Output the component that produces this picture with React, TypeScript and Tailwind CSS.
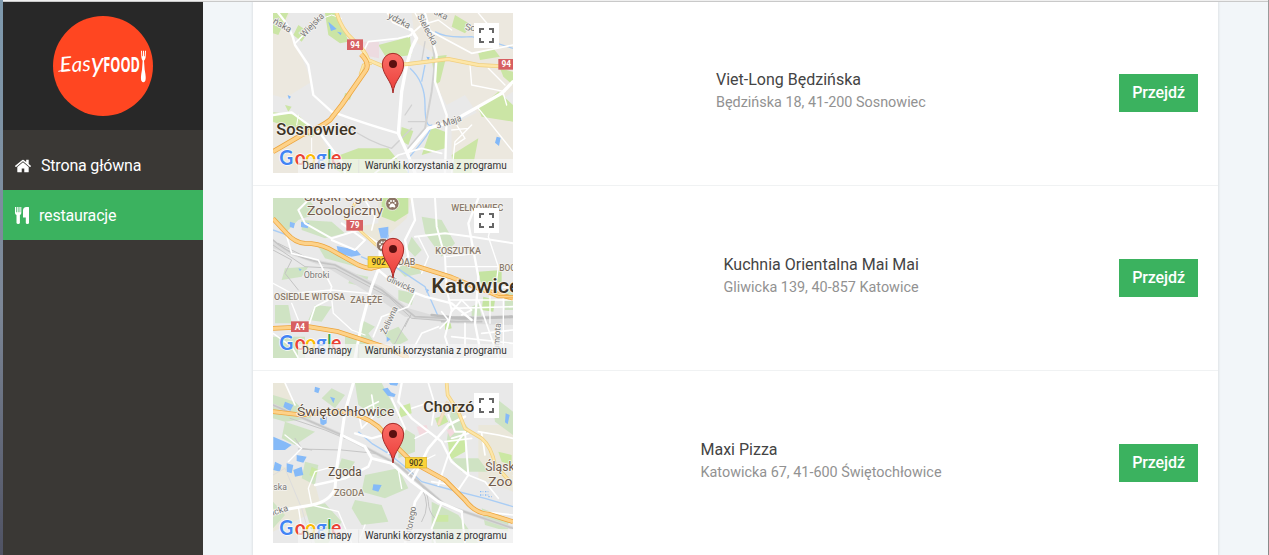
import type { ReactNode } from "react";

const ROAD = "#ffffff";

type Pts = { d: string; w?: number; c?: string };

function Lines({ items, color = ROAD, width = 6 }: { items: Pts[]; color?: string; width?: number }) {
  return (
    <g fill="none" strokeLinejoin="round" strokeLinecap="round">
      {items.map((r, i) => (
        <path key={i} d={r.d} stroke={r.c ?? color} strokeWidth={r.w ?? width} />
      ))}
    </g>
  );
}

function Highway({ d, width = 11, fill = "#fdd28a", edge = "#eda53d" }: { d: string; width?: number; fill?: string; edge?: string }) {
  return (
    <g fill="none" strokeLinejoin="round">
      <path d={d} stroke={edge} strokeWidth={width} />
      <path d={d} stroke={fill} strokeWidth={width - 4.5} />
    </g>
  );
}

function Label({ x, y, size, w, color = "#5f5347", bold = false, rotate = 0, children }: {
  x: number; y: number; size: number; w?: number; color?: string; bold?: boolean; rotate?: number; children: string;
}) {
  return (
    <text
      x={x} y={y} fontSize={size} fill={color} stroke="#f5f3ef" strokeWidth={5} strokeLinejoin="round" paintOrder="stroke"
      fontWeight={bold ? 500 : 400} textLength={w} lengthAdjust="spacingAndGlyphs"
      transform={rotate ? `rotate(${rotate} ${x} ${y})` : undefined}
    >
      {children}
    </text>
  );
}

function Shield({ x, y, w, h = 32, yellow = false, children }: { x: number; y: number; w: number; h?: number; yellow?: boolean; children: string }) {
  return (
    <g>
      <rect x={x} y={y} width={w} height={h} fill={yellow ? "#fbd338" : "#d75f62"} stroke={yellow ? "#dcb52a" : "none"} strokeWidth={2} />
      <text x={x + w / 2} y={y + h / 2 + 9} fontSize={25} fontWeight={yellow ? 500 : 700} textAnchor="middle" fill={yellow ? "#4a4220" : "#ffffff"}>
        {children}
      </text>
    </g>
  );
}

function GoogleMark() {
  const letters: [string, number, string, number][] = [
    ["G", 43, "#4285f4", 42], ["o", 89, "#ea4335", 33], ["o", 121, "#fbbc05", 33], ["g", 153, "#4285f4", 32], ["l", 187, "#34a853", 12], ["e", 198, "#ea4335", 31],
  ];
  return (
    <g className="font-[Lato,sans-serif]" fontSize={60} fontWeight={700} stroke="#ffffff" strokeWidth={4} paintOrder="stroke" strokeLinejoin="round">
      {letters.map(([ch, x, color, w], i) => (
        <text key={i} x={x} y={480} fill={color} textLength={w} lengthAdjust="spacingAndGlyphs">{ch}</text>
      ))}
    </g>
  );
}

function MapView({ id, children }: { id: string; children: ReactNode }) {
  return (
    <svg className="block h-40 w-60 shrink-0 font-[Roboto,sans-serif]" viewBox="24 24 720 480">
      <rect x="24" y="24" width="720" height="480" fill="#e9e9e9" />
      {children}
      <defs>
        <linearGradient id={id} x1="0" y1="0" x2="0" y2="1">
          <stop offset="0" stopColor="#fb6f68" />
          <stop offset="1" stopColor="#ea3c37" />
        </linearGradient>
      </defs>
      <path d="M384 264C381 226 352 211 352 177a32 32 0 0 1 64 0C416 211 387 226 384 264Z" fill={`url(#${id})`} stroke="#a52a27" strokeWidth="3" />
      <circle cx="384" cy="177" r="12" fill="#5c1010" />
      <rect x="627" y="54" width="75" height="75" fill="#ffffff" />
      <path d="M645 84V72h12M672 72h12V84M684 99v12H672M657 111H645V99" fill="none" stroke="#666666" strokeWidth="6" />
      <GoogleMark />
      <rect x="99" y="462" width="645" height="42" fill="#f5f5f5" fillOpacity="0.72" />
      <path d="M281 464V504" stroke="#dddddd" strokeWidth="2" />
      <text x="112" y="492" fontSize="30" fill="#333333" textLength="148" lengthAdjust="spacingAndGlyphs">Dane mapy</text>
      <text x="299" y="492" fontSize="30" fill="#333333" textLength="426" lengthAdjust="spacingAndGlyphs">Warunki korzystania z programu</text>
    </svg>
  );
}

function SosnowiecMap() {
  return (
    <MapView id="pinSosnowiec">
      <path d="M24 24H75L60 60 100 130 140 230 60 280 24 270ZM380 24H744V260L640 330 600 270 545 300 510 235 515 150 450 110 440 24ZM24 325 100 330 165 390 230 504H24ZM560 360 640 320 744 340V504H560Z" fill="#ece8df" />
      <g fill="#cbe5a5">
        <path d="M24 24H70L40 90 24 85ZM180 24H210L240 80 250 110 225 115 190 90ZM100 60 130 80 110 110 85 90ZM25 322 100 330 155 385 140 395 24 350ZM640 310 700 260 744 300V350L650 335ZM500 365 540 380V430L470 450ZM340 120 435 95 440 150 365 160ZM500 155 545 150 525 230 510 240ZM560 450 640 400 620 504H565ZM410 366 445 378 430 420 405 405ZM570 30 620 60 600 85 560 65ZM705 190 744 200V240L715 215ZM170 470 280 430 370 430 430 504H230ZM60 300 80 305 70 320ZM240 264l20 5-5 15-18-4ZM640 145l45-15 20 25-60 10Z" />
      </g>
      <path d="M292 110h50v50l-50-10Z" fill="#eddbe0" />
      <path d="M190 50 215 72 198 78ZM216 80l14 3-3 8ZM695 395l12 3-5 25-12-10ZM68 270l10 5-6 8ZM484 155l10 2-4 10Z" fill="#82b8f8" />
      <g fill="none" stroke="#a9cdf5" strokeWidth="4">
        <path d="M510 80Q540 100 620 95L680 110 744 130M435 190Q480 230 480 300T500 360Q500 380 430 460V504M480 180 470 230" />
      </g>
      <Lines color="#d1d1d1" width={4} items={[
        { d: "M470 24 500 100 510 170 500 260 480 370 430 430", w: 6 }, { d: "M240 360Q310 410 380 430L440 370" }, { d: "M430 350H480M420 330l20-30M480 110 470 170" },
      ]} />
      <Lines items={[
        { d: "M40 24Q80 70 90 120L130 180 145 270 200 320Q310 360 400 385", w: 7 },
        { d: "M90 115 130 75 160 40", w: 5 }, { d: "M370 24 385 50 440 75 455 100 440 130 425 180 410 260 400 385 425 440 450 504", w: 10 },
        { d: "M430 440 490 370 560 350 640 305 710 265 744 230", w: 10 }, { d: "M480 24 500 100 515 150 510 230 545 330 540 504", w: 7 },
        { d: "M430 95 470 60 500 80 620 145 744 120", w: 5 }, { d: "M290 150 310 110 400 100 440 90", w: 5 },
        { d: "M24 330 80 322 165 385 230 470 240 504", w: 7 }, { d: "M615 180 620 240 720 260M670 190 720 240", w: 4 },
        { d: "M330 504 400 450 470 430 530 445", w: 5 }, { d: "M560 504 570 410 620 360M575 360 600 400 570 420M560 375 610 370", w: 4 },
        { d: "M640 310 744 440M450 24 470 60 520 45 560 75M640 24 670 60M715 265 725 300", w: 4 },
        { d: "M145 50 200 30 230 40M100 330 95 360M140 400V440", w: 3 },
      ]} />
      <Highway d="M215 24Q230 75 265 105T310 165L350 182 430 177 550 162 640 180 744 186" width={12} fill="#fde6a8" edge="#f1cf7e" />
      <Highway d="M285 210 295 180 320 175" width={9} fill="#fde6a8" edge="#f1cf7e" />
      <Highway d="M288 148Q315 175 303 195L230 300 195 345Q170 365 110 390L24 440" width={15} />
      <Label x={22} y={54} size={28} rotate={30} color="#777777">ńska</Label>
      <Label x={118} y={98} size={28} w={88} rotate={-46} color="#777777">Wiejska</Label>
      <Label x={367} y={38} size={28} rotate={28} color="#777777">ydzka</Label>
      <Label x={456} y={34} size={27} rotate={62} color="#777777">Sielecka</Label>
      <Label x={505} y={27} size={27} rotate={25} color="#777777">ska</Label>
      <Label x={599} y={74} size={28} rotate={10} color="#777777">So</Label>
      <Label x={517} y={371} size={28} w={78} rotate={-18} color="#777777">3 Maja</Label>
      <Shield x={246} y={103} w={48}>94</Shield>
      <Shield x={700} y={162} w={48}>94</Shield>
      <Label x={34} y={389} size={48} w={240} bold color="#3d3425">Sosnowiec</Label>
    </MapView>
  );
}

function Paw({ x, y }: { x: number; y: number }) {
  return (
    <g transform={`translate(${x} ${y})`}>
      <circle r="20" fill="#8c7465" stroke="#ffffff" strokeWidth="2" />
      <g fill="#ffffff">
        <path d="M0-1C5-1 9 6 9 9S4 12 0 10C-4 12-9 12-9 9S-5-1 0-1Z" />
        <circle cx="-9" cy="-2" r="3" /><circle cx="9" cy="-2" r="3" /><circle cx="-4" cy="-8" r="3" /><circle cx="4" cy="-8" r="3" />
      </g>
    </g>
  );
}

function KatowiceMap() {
  return (
    <MapView id="pinKatowice">
      <path d="M340 24H440L425 85 330 170 270 110 340 100Z" fill="#eae7da" />
      <g fill="#cfe3c3">
        <path d="M24 24H130L160 70 100 90 60 130 24 90ZM110 90 200 95 240 130 180 145 110 120ZM160 170 250 200 290 235 180 205ZM60 235 130 230 110 260 50 270ZM30 345 70 345 80 400 30 400ZM150 345 200 350 170 395 130 390ZM470 80 530 90 570 160 530 200 480 130ZM400 300 450 310 440 345 400 330ZM355 430 400 410 430 450 390 470ZM260 250 310 260 300 290 250 280ZM390 230l60-10 20 30-50 10ZM290 390l40 20-30 30-20-15ZM720 300h24v60h-24ZM440 140l30 40-20 20-25-25Z" />
        <path d="M24 440H120V504H24ZM240 440 310 430 360 504H240ZM620 350l20-10 10 40-30 5Z" />
      </g>
      <path d="M350 24H430V70L390 95 350 80ZM640 245l70-5v35l-60 15ZM540 395l15-5 5 25-20 5ZM655 320l35 10-5 35-35-5Z" fill="#c5e4a2" />
      <path d="M340 115 370 110V140L350 155ZM215 168 275 180 288 195 260 200 220 190ZM75 95l15 5-4 15-12-5ZM108 95l25 5-5 15-20-4ZM365 440l12 8-12 8ZM480 295l12 5-6 10ZM100 235l10 3-5 6Z" fill="#8bbcf9" />
      <path d="M370 135 360 180 390 230 480 290 520 380M24 120 80 140M288 200 360 230" fill="none" stroke="#a9cdf5" strokeWidth="4" />
      <path d="M24 150Q90 200 210 220L350 290 430 355 520 380 744 375V405L560 400 420 380 330 320 190 235 24 175Z" fill="#dcdcdc" />
      <Lines color="#c4c4c4" width={3} items={[
        { d: "M24 150Q90 210 210 225L350 300 450 380 600 388 744 382", w: 5 }, { d: "M24 165 120 230 210 235 370 320 440 385 580 395" },
        { d: "M24 180 80 210 60 250 100 300M40 160 150 215M430 385 390 460 330 504M440 370 420 410" }, { d: "M500 375 560 382 640 384 740 380", w: 8, c: "#bdbdbd" }, { d: "M530 395H650", w: 5 },
      ]} />
      <Lines items={[
        { d: "M345 170V225L320 290 290 400 270 504", w: 9 }, { d: "M440 24 450 90 420 150 430 200 400 230", w: 7 },
        { d: "M340 240 400 290 480 320 560 340 620 390", w: 7 }, { d: "M450 140 540 130 620 140 744 160", w: 6 },
        { d: "M510 24 515 110 540 200 545 300 560 360 540 440 560 504", w: 6 }, { d: "M640 24 610 100 640 260 630 400 650 504", w: 7 },
        { d: "M545 290 620 300 744 290M550 330H744M560 355 744 350M640 330 700 504", w: 5 },
        { d: "M130 30 100 60 120 100 200 145 280 120 340 160M230 100 300 150 270 180 200 150", w: 6 },
        { d: "M24 90 60 120 80 190 160 210 200 290 190 330 150 350 130 410", w: 5 },
        { d: "M24 280 80 310 200 300 310 310M200 325 205 370 260 420 300 435M80 340 100 390", w: 4 },
        { d: "M520 410 470 430 430 504M600 400 600 504M650 430 744 420M560 440 744 460M450 310 430 350 350 380 325 440", w: 5 },
        { d: "M460 140 490 200 470 250M545 200 640 190M545 230 700 230M690 60 670 140 700 230 690 310M675 320V400M715 320V470", w: 4 },
        { d: "M560 365 590 330 620 360 590 375M530 365 550 390 525 415M300 30 330 80 320 120M24 430 80 470 100 504", w: 5 },
      ]} />
      <Highway d="M310 24 270 40 240 90M250 90 350 180" width={9} fill="#fde6a8" edge="#f1cf7e" />
      <Highway d="M24 86 65 130Q90 158 120 160 160 160 190 175L280 225Q305 235 320 235L400 215 460 230 560 262 640 295 744 325" width={14} />
      <Highway d="M24 415 130 410 220 425 370 475 430 504" width={14} />
      <Highway d="M640 295 700 320 744 320" width={10} />
      <Label x={117} y={34} size={37} w={236} color="#715c4d">Śląski Ogród</Label>
      <Label x={126} y={75} size={37} w={228} color="#715c4d">Zoologiczny</Label>
      <Paw x={382} y={41} />
      <Paw x={354} y={165} />
      <Label x={559} y={62} size={25} w={156} bold color="#8a7b6c">WEŁNOWIEC</Label>
      <Label x={511} y={191} size={25} w={137} bold color="#8a7b6c">KOSZUTKA</Label>
      <Label x={703} y={242} size={25} bold color="#8a7b6c">BOG</Label>
      <Label x={400} y={225} size={25} w={51} bold color="#8a7b6c">DĄB</Label>
      <Label x={116} y={265} size={26} w={77} color="#777777">Obroki</Label>
      <Label x={27} y={330} size={25} w={213} bold color="#8a7b6c">OSIEDLE WITOSA</Label>
      <Label x={256} y={338} size={25} w={96} bold color="#8a7b6c">ZAŁĘŻE</Label>
      <Label x={362} y={271} size={26} w={92} rotate={25} color="#777777">Gliwicka</Label>
      <Label x={362} y={434} size={26} w={88} rotate={-65} color="#777777">Żeliwna</Label>
      <Label x={702} y={480} size={26} w={80} rotate={-86} color="#777777">umrota</Label>
      <Label x={499} y={308} size={58} w={268} bold color="#3d3425">Katowice</Label>
      <Shield x={244} y={90} w={50}>79</Shield>
      <Shield x={309} y={200} w={64} yellow>902</Shield>
      <Shield x={78} y={394} w={53}>A4</Shield>
    </MapView>
  );
}

function MaxiMap() {
  return (
    <MapView id="pinMaxi">
      <path d="M24 24H60L80 70 24 110ZM24 270 140 290 170 400 24 470ZM640 150H744V350L640 310Z" fill="#eae7da" />
      <g fill="#cfe3c3">
        <path d="M24 60 90 80 140 130 60 140 24 130ZM60 140 150 170 90 210 50 190ZM200 40 240 60 210 100 170 70ZM270 24H350L390 100 340 130 280 90ZM400 150 450 180 450 230 400 250ZM120 400 180 385 230 440 190 504H150ZM270 375 350 390 370 440 290 450 260 400ZM300 300 400 280 430 340 360 370 290 350ZM120 260 160 270 150 330 110 310ZM560 250 640 250 670 290 590 290ZM500 380 580 420 640 504H500ZM680 60 744 110V180L690 140ZM24 380 60 420 24 460ZM560 90 610 160 580 240 545 200ZM230 250l40 10-20 30-30-10ZM650 400l80 30v40l-70-20Z" />
      </g>
      <path d="M548 195 605 190 600 230 555 255ZM405 95 435 85 440 115 400 130ZM140 275l20 10-12 25-15-10ZM510 130l30-10 10 20-30 15ZM700 230l40 10v30l-30-10ZM510 420h40v20h-40Z" fill="#cbe8a3" />
      <path d="M455 155l30-5 5 20-25 15ZM545 165l15-5 10 12-15 15Z" fill="#f3d9de" />
      <path d="M60 80 85 90 75 110 55 95ZM25 185 60 200 80 210 60 225 25 225ZM65 265 85 270 80 295 65 290ZM85 285 110 275 115 300 90 305ZM95 240l30 5-10 18-20-5ZM30 260l20 10-5 20-20-5ZM150 35l15 5-5 15-12-5ZM325 328 350 330 340 350 322 345ZM352 42 368 38 378 52 392 58 388 66 368 62ZM165 130l20-5v20l-18 10ZM195 65l15 5-5 15ZM722 115l12 5-6 28-8-6ZM372 24H400L396 32 376 30Z" fill="#85baf8" />
      <path d="M645 350h10m5 0h10m-25 10h10m5 0h10M670 365h10" stroke="#85baf8" strokeWidth="4" strokeDasharray="4 4" />
      <path d="M320 205 370 235 420 275 470 320 560 345 660 370 744 395M280 170 320 205" fill="none" stroke="#a9cdf5" strokeWidth="4" />
      <path d="M24 90 230 180 400 270 540 390 744 460" fill="none" stroke="#dadada" strokeWidth="10" />
      <Lines color="#c6c6c6" width={3} items={[
        { d: "M24 90 230 180 400 270 540 390 744 460", w: 5 }, { d: "M100 222 230 225 330 235M90 190 110 220 140 225M75 130 180 165 240 190" },
        { d: "M440 290Q490 350 490 380T510 430M470 340Q500 390 470 440" }, { d: "M24 300 60 280 110 400 140 504", c: "#dddddd" },
      ]} />
      <Lines items={[
        { d: "M265 24 240 110 230 180 215 280 210 340Q195 380 140 390L24 410", w: 9 }, { d: "M230 180 300 215 320 250 380 265 440 320 520 380 590 410", w: 9 },
        { d: "M270 175 320 190 355 180M320 250 310 275 240 310 150 330", w: 7 }, { d: "M410 24 400 80 440 130 530 200 560 260 610 300", w: 7 },
        { d: "M440 320 490 220 550 150 600 125", w: 8 }, { d: "M380 70 420 160 400 210 370 235", w: 6 },
        { d: "M550 120 570 170 600 170 550 240 520 330", w: 6 }, { d: "M610 175 560 190M600 170 610 300 580 345", w: 6 },
        { d: "M470 350 450 380 440 430 420 504", w: 8 }, { d: "M530 385 500 460 510 504M590 410 600 504", w: 6 },
        { d: "M60 180 110 220 70 260M140 390 130 340 150 290 205 275M140 390 220 410 260 504M100 395 110 460 160 490", w: 4 },
        { d: "M320 60 330 120 290 160 280 110 340 80M60 24 90 90M440 100 500 80 540 90M490 24 510 90 500 150", w: 5 },
        { d: "M640 170 700 180 744 190M650 175 660 240M610 300 660 320 700 370M650 410 744 420M540 200 620 190M580 345 560 330 500 320", w: 5 },
        { d: "M450 190 490 170 530 200M400 285 410 340M430 300 470 260 510 240M300 450 280 504", w: 4 },
      ]} />
      <Highway d="M545 24 548 60 580 110 600 160 650 190Q680 215 690 270L744 330" width={11} fill="#fde6a8" edge="#f1cf7e" />
      <Highway d="M520 150 540 100 548 80" width={10} fill="#f3dfc4" edge="#ecd6b5" />
      <Highway d="M24 110 110 120 220 108Q290 115 340 155L400 220 440 260 540 315 600 375Q630 415 670 417L744 440" width={14} />
      <Label x={96} y={124} size={37} w={292} color="#5b4b3c">Świętochłowice</Label>
      <Label x={475} y={112} size={46} w={188} bold color="#3d3425">Chorzów</Label>
      <Label x={190} y={304} size={36} w={100} color="#5b4b3c">Zgoda</Label>
      <Label x={207} y={363} size={26} w={90} bold color="#8a7b6c">ZGODA</Label>
      <Label x={661} y={288} size={40} w={97} color="#715c4d">Śląski</Label>
      <Label x={670} y={332} size={40} w={82} color="#715c4d">Zool</Label>
      <Label x={25} y={346} size={26} color="#777777">ska</Label>
      <Label x={24} y={422} size={27} rotate={-18} color="#777777">icka</Label>
      <Label x={435} y={500} size={27} w={106} rotate={-80} color="#777777">Hutorego</Label>
      <Shield x={421} y={247} w={64} yellow>902</Shield>
    </MapView>
  );
}

function Logo() {
  return (
    <svg className="size-[100px]" viewBox="24 18 300 300" aria-label="EasyFOOD">
      <circle cx="174" cy="168" r="150" fill="#ff4621" />
      <g fill="#ffffff">
        <g className="font-[Lato,sans-serif]" fontStyle="italic">
          <text x="46" y="186" fontSize="62" textLength="36" lengthAdjust="spacingAndGlyphs" transform="rotate(-5 46 186)">E</text>
          <text x="81" y="186" fontSize="62" textLength="57" lengthAdjust="spacingAndGlyphs" transform="rotate(-4 81 186)">as</text>
          <text x="138" y="186" fontSize="80" textLength="38" lengthAdjust="spacingAndGlyphs">y</text>
        </g>
        <text className="font-['Open_Sans',sans-serif]" x="175" y="187" fontSize="66" fontWeight="700" textLength="110" lengthAdjust="spacingAndGlyphs">FOOD</text>
        <path d="M288 122 289 142Q290 149 293 152L291 179Q286 204 289 212 295 222 301 212 304 204 299 179L297 152Q301 149 302 142L303 122H300L299 139H297V122H294V139H292L291 122Z" />
      </g>
      <path d="M40 184Q57 180 72 178" stroke="#ffffff" strokeWidth="3" fill="none" />
    </svg>
  );
}

function HomeIcon() {
  return (
    <svg className="h-[18px] w-4" viewBox="24 0 1616 1792" fill="#ffffff">
      <path d="M1408 992v480q0 26-19 45t-45 19h-384v-384h-256v384h-384q-26 0-45-19t-19-45v-480q0-1 .5-3t.5-3l575-474 575 474q1 2 1 6zm223-69l-62 74q-8 9-21 11h-3q-13 0-21-7l-692-577-692 577q-12 8-24 7-13-2-21-11l-62-74q-8-10-7-23.5t11-21.5l719-599q32-26 76-26t76 26l244 204v-195q0-14 9-23t23-9h192q14 0 23 9t9 23v408l219 182q10 8 11 21.5t-7 23.5z" />
    </svg>
  );
}

function CutleryIcon() {
  return (
    <svg className="mb-0.5 h-[17px] w-3.5" viewBox="0 0 14 17" fill="#ffffff">
      <path d="M0 0H1V5.3H1.7V0H2.8V5.3H3.5V0H4.6V5.3H5.3V0H6.3V6Q6.3 7.4 4.9 8V16Q4.7 17 3.2 17T1.5 16V8Q0 7.4 0 6ZM14 .5V16Q14 17 12.4 17T10.8 16V10.5H8V3.5Q8 0 11.5 0H13.5Q14 0 14 .5Z" />
    </svg>
  );
}

const restaurants = [
  { name: "Viet-Long Będzińska", address: "Będzińska 18, 41-200 Sosnowiec", width: "w-[210px]", map: <SosnowiecMap /> },
  { name: "Kuchnia Orientalna Mai Mai", address: "Gliwicka 139, 40-857 Katowice", width: "w-[195px]", map: <KatowiceMap /> },
  { name: "Maxi Pizza", address: "Katowicka 67, 41-600 Świętochłowice", width: "w-[241px]", map: <MaxiMap /> },
];

export default function App() {
  return (
    <div className="flex h-[555px] w-full overflow-hidden bg-[#f2f6f9] font-[Roboto,sans-serif]">
      <div className="w-[3px] shrink-0 bg-linear-to-b from-[#7f9aae] via-[#7c8797] via-55% to-[#4f5263]" />
      <div className="flex min-w-0 grow flex-col">
        <div className="h-0.5 shrink-0 border-b border-[#c9c9c9] bg-[#f0f0f0]" />
        <div className="flex min-h-0 grow">
          <aside className="w-[200px] shrink-0 bg-[#3a3835] text-white">
            <div className="flex h-32 justify-center bg-[#282828] pt-3.5">
              <Logo />
            </div>
            <nav className="pt-2.5 text-base tracking-[-0.18px]">
              <a className="flex h-[50px] items-center pt-0.5 pl-3">
                <HomeIcon />
                <span className="ml-2.5">Strona główna</span>
              </a>
              <a className="flex h-[50px] items-center bg-[#3bb25f] pt-0.5 pl-3">
                <CutleryIcon />
                <span className="ml-2.5">restauracje</span>
              </a>
            </nav>
          </aside>
          <main className="grow overflow-hidden pr-[50px] pl-[50px]">
            <ul className="-mt-px bg-white shadow-[0_0_3px_rgba(0,0,0,0.14)]">
              {restaurants.map((r) => (
                <li key={r.name} className="flex h-[185px] items-center border-b border-[#f0f2f3] pr-5 pl-5">
                  {r.map}
                  <div className="flex grow justify-center pb-0.5 pl-2.5">
                    <div className={r.width}>
                      <h2 className="text-base leading-[22px] whitespace-nowrap text-[#444444]">{r.name}</h2>
                      <p className="text-[14.4px] leading-6 whitespace-nowrap text-[#929292]">{r.address}</p>
                    </div>
                  </div>
                  <button className="h-[38px] w-[79px] bg-[#3bb25f] text-base font-medium tracking-[-0.1px] text-white">Przejdź</button>
                </li>
              ))}
            </ul>
          </main>
        </div>
      </div>
      <div className="w-px shrink-0 bg-linear-to-b from-[#9b9b9b] to-[#8a8a8a]" />
    </div>
  );
}
